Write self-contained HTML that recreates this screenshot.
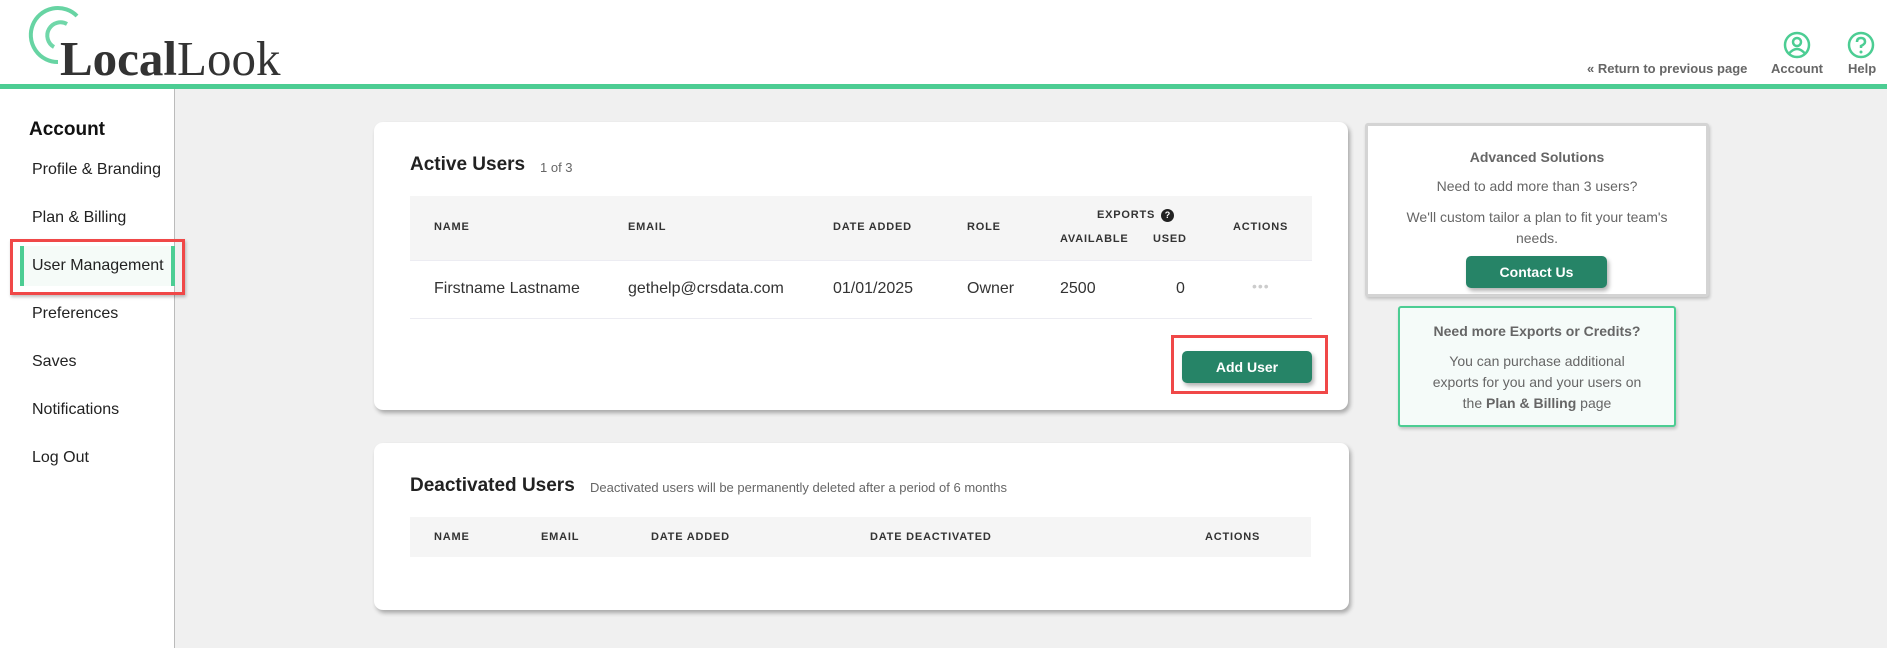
<!DOCTYPE html>
<html><head><meta charset="utf-8"><style>
*{margin:0;padding:0;box-sizing:border-box}
body{width:1887px;height:648px;overflow:hidden;background:#f0f0f0;font-family:"Liberation Sans",Arial,sans-serif;position:relative;color:#333}
.abs{position:absolute}
header{position:absolute;left:0;top:0;width:1887px;height:84px;background:#fff}
.gl{position:absolute;left:0;top:84px;width:1887px;height:5px;background:#4ccd93}
.side{position:absolute;left:0;top:89px;width:175px;height:559px;background:#fff;border-right:1px solid #bbb}
.side .h{position:absolute;left:29px;top:30px;font-size:19px;font-weight:bold;color:#111}
.side .i{position:absolute;left:32px;font-size:16px;color:#222}
.card{position:absolute;background:#fff;border-radius:9px;box-shadow:2px 3px 4px rgba(0,0,0,.3)}
.th{position:absolute;font-size:11px;font-weight:bold;letter-spacing:.8px;color:#333}
.td{position:absolute;font-size:16px;color:#333}
.btn{position:absolute;background:#268467;color:#fff;font-weight:bold;font-size:14px;text-align:center;border-radius:5px;box-shadow:2px 3px 4px rgba(0,0,0,.3)}
.ct{position:absolute;width:100%;text-align:center;color:#666;font-size:14px}
</style></head><body>
<header>
<svg class="abs" style="left:22px;top:2px" width="70" height="70" viewBox="0 0 70 70">
<path d="M55 14 A27 27 0 1 0 36 60" fill="none" stroke="#4ccd93" stroke-width="4" opacity=".85"/>
<path d="M45 22 A13 13 0 1 0 32 45" fill="none" stroke="#4ccd93" stroke-width="4" opacity=".8"/>
</svg>
<div class="abs" style="left:60px;top:30px;font-family:'Liberation Serif',serif;font-size:49px;color:#333"><b>Local</b><span style="font-weight:normal">Look</span></div>
<div class="abs" style="left:1587px;top:61px;font-size:13px;font-weight:bold;color:#666">« Return to previous page</div>
<svg class="abs" style="left:1783px;top:31px" width="28" height="28" viewBox="0 0 28 28"><circle cx="14" cy="14" r="12" fill="none" stroke="#4ccd93" stroke-width="2.5"/><circle cx="14" cy="11" r="4" fill="none" stroke="#4ccd93" stroke-width="2.5"/><path d="M6.5 22 Q14 14 21.5 22" fill="none" stroke="#4ccd93" stroke-width="2.5"/></svg>
<div class="abs" style="left:1771px;top:61px;font-size:13px;font-weight:bold;color:#666">Account</div>
<svg class="abs" style="left:1847px;top:31px" width="28" height="28" viewBox="0 0 28 28"><circle cx="14" cy="14" r="12" fill="none" stroke="#4ccd93" stroke-width="2.5"/><path d="M10 11 Q10 7 14 7 Q18 7 18 11 Q18 13 14 15 V17" fill="none" stroke="#4ccd93" stroke-width="2.5"/><circle cx="14" cy="21" r="1.5" fill="#4ccd93"/></svg>
<div class="abs" style="left:1848px;top:61px;font-size:13px;font-weight:bold;color:#666">Help</div>
</header>
<div class="gl"></div>
<div class="side">
<div class="h">Account</div>
<div class="i" style="top:72px">Profile &amp; Branding</div>
<div class="i" style="top:120px">Plan &amp; Billing</div>
<div class="abs" style="left:20px;top:157px;width:155px;height:40px;background:#f5fbf8;border-left:4px solid #4ccd93"></div>
<div class="abs" style="left:171px;top:157px;width:4px;height:40px;background:#4ccd93"></div>
<div class="i" style="top:168px">User Management</div>
<div class="i" style="top:216px">Preferences</div>
<div class="i" style="top:264px">Saves</div>
<div class="i" style="top:312px">Notifications</div>
<div class="i" style="top:360px">Log Out</div>
</div>
<div class="abs" style="left:10px;top:239px;width:175px;height:56px;border:3px solid #f04848;box-shadow:1px 2px 3px rgba(0,0,0,.25)"></div>

<div class="card" style="left:374px;top:122px;width:974px;height:288px">
<div class="abs" style="left:36px;top:32px;font-size:19px;font-weight:bold;color:#222">Active Users</div>
<div class="abs" style="left:166px;top:38px;font-size:13px;color:#666">1 of 3</div>
<div class="abs" style="left:36px;top:74px;width:902px;height:64px;background:#f5f5f5"></div>
<div class="th" style="left:60px;top:99px">NAME</div>
<div class="th" style="left:254px;top:99px">EMAIL</div>
<div class="th" style="left:459px;top:99px">DATE ADDED</div>
<div class="th" style="left:593px;top:99px">ROLE</div>
<div class="th" style="left:723px;top:87px">EXPORTS</div>
<div class="abs" style="left:787px;top:87px;width:13px;height:13px;border-radius:50%;background:#222;color:#fff;font-size:9px;font-weight:bold;text-align:center;line-height:13px">?</div>
<div class="th" style="left:686px;top:111px">AVAILABLE</div>
<div class="th" style="left:779px;top:111px">USED</div>
<div class="th" style="left:859px;top:99px">ACTIONS</div>
<div class="abs" style="left:36px;top:138px;width:902px;height:1px;background:#ececf2"></div>
<div class="td" style="left:60px;top:158px">Firstname Lastname</div>
<div class="td" style="left:254px;top:158px">gethelp@crsdata.com</div>
<div class="td" style="left:459px;top:158px">01/01/2025</div>
<div class="td" style="left:593px;top:158px">Owner</div>
<div class="td" style="left:686px;top:158px">2500</div>
<div class="td" style="left:802px;top:158px">0</div>
<div class="abs" style="left:878px;top:156px;font-size:14px;color:#ccc;letter-spacing:1px">•••</div>
<div class="abs" style="left:36px;top:196px;width:902px;height:1px;background:#ececf2"></div>
<div class="btn" style="left:808px;top:229px;width:130px;height:32px;line-height:32px">Add User</div>
</div>
<div class="abs" style="left:1171px;top:335px;width:157px;height:59px;border:3px solid #f04848"></div>

<div class="card" style="left:374px;top:443px;width:975px;height:167px">
<div class="abs" style="left:36px;top:32px;font-size:19px;font-weight:bold;color:#222">Deactivated Users</div>
<div class="abs" style="left:216px;top:37px;font-size:13px;color:#666">Deactivated users will be permanently deleted after a period of 6 months</div>
<div class="abs" style="left:36px;top:74px;width:901px;height:40px;background:#f5f5f5"></div>
<div class="th" style="left:60px;top:88px">NAME</div>
<div class="th" style="left:167px;top:88px">EMAIL</div>
<div class="th" style="left:277px;top:88px">DATE ADDED</div>
<div class="th" style="left:496px;top:88px">DATE DEACTIVATED</div>
<div class="th" style="left:831px;top:88px">ACTIONS</div>
</div>

<div class="abs" style="left:1365px;top:123px;width:344px;height:174px;background:#fff;border:3px solid #d4d4d4;border-radius:3px;box-shadow:1px 2px 3px rgba(0,0,0,.2)">
<div class="ct" style="top:23px;font-weight:bold">Advanced Solutions</div>
<div class="ct" style="top:52px">Need to add more than 3 users?</div>
<div class="ct" style="top:81px;line-height:21px;padding:0 28px">We'll custom tailor a plan to fit your team's needs.</div>
<div class="btn" style="left:98px;top:130px;width:141px;height:32px;line-height:32px">Contact Us</div>
</div>
<div class="abs" style="left:1398px;top:306px;width:278px;height:121px;background:#f5fbf9;border:2.5px solid #4ccd93;border-radius:3px;box-shadow:1px 2px 3px rgba(0,0,0,.2)">
<div class="ct" style="top:15px;font-weight:bold">Need more Exports or Credits?</div>
<div class="ct" style="top:43px;line-height:21px;padding:0 30px">You can purchase additional exports for you and your users on the <b>Plan &amp; Billing</b> page</div>
</div>
</body></html>
